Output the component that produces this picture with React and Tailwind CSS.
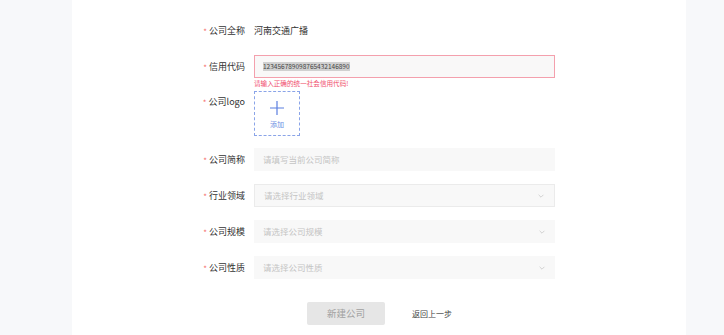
import React from 'react';

const font = { fontFamily: '"Noto Sans CJK SC", "Noto Sans", sans-serif' };

const Label = ({ children, top }) => (
  <div className={`w-[56px] shrink-0 flex justify-end text-[9px] text-[#333] leading-[12px] ${top ? 'self-start pt-[5px]' : 'mt-[1px]'}`}>
    <span className="text-[8px] text-[#f56c6c] mr-[2px] mt-[1px]">*</span>
    <span>{children}</span>
  </div>
);

const Chevron = () => (
  <svg width="8" height="8" viewBox="0 0 10 10" className="text-[#c8c8c8]">
    <path d="M2 3.5 L5 6.5 L8 3.5" fill="none" stroke="currentColor" strokeWidth="1" />
  </svg>
);

const SelectBox = ({ placeholder, bordered }) => (
  <div className={`w-[301px] h-[23px] flex items-center justify-between px-[9px] bg-[#f8f8f8] ${bordered ? 'border border-[#ebebeb]' : ''}`}>
    <span className="text-[8.5px] text-[#c4c4c4]">{placeholder}</span>
    <Chevron />
  </div>
);

const App = () => {
  return (
    <div className="h-[335px] w-full bg-[#f7f8fa] pl-[72px]" style={font}>
      <div className="w-[614px] h-full bg-white flex flex-col pl-[117px]">
        <div className="mt-[19px] h-[23px] flex items-center gap-[9px]">
          <Label>公司全称</Label>
          <span className="text-[9px] text-[#333]">河南交通广播</span>
        </div>

        <div className="mt-[13px] h-[23px] flex items-center gap-[9px]">
          <Label>信用代码</Label>
          <div className="w-[301px] h-[23px] flex items-center px-[8px] bg-[#f9f8f8] border border-[#f4a0ad]">
            <span className="text-[6.5px] text-[#444] bg-[#d0d0d0] leading-[9px]">123456789098765432146890</span>
          </div>
        </div>
        <div className="h-[13px] pl-[65px] text-[6.6px] leading-[10px] text-[#f0506e]">请输入正确的统一社会信用代码!</div>

        <div className="flex gap-[9px]">
          <Label top>公司logo</Label>
          <div className="w-[46px] h-[45px] border border-dashed border-[#8aa4e8] flex flex-col items-center justify-center">
            <svg width="16" height="16" viewBox="0 0 16 16" className="text-[#5b7fe0] mt-[2px]">
              <path d="M8 1 V15 M1 8 H15" stroke="currentColor" strokeWidth="1.2" fill="none" />
            </svg>
            <span className="text-[7px] text-[#6f8fe3] mt-[3px]">添加</span>
          </div>
        </div>

        <div className="mt-[12px] h-[23px] flex items-center gap-[9px]">
          <Label>公司简称</Label>
          <div className="w-[301px] h-[23px] flex items-center px-[9px] bg-[#f8f8f8]">
            <span className="text-[8.5px] text-[#c4c4c4]">请填写当前公司简称</span>
          </div>
        </div>

        <div className="mt-[13px] h-[23px] flex items-center gap-[9px]">
          <Label>行业领域</Label>
          <SelectBox placeholder="请选择行业领域" bordered />
        </div>

        <div className="mt-[13px] h-[23px] flex items-center gap-[9px]">
          <Label>公司规模</Label>
          <SelectBox placeholder="请选择公司规模" />
        </div>

        <div className="mt-[13px] h-[23px] flex items-center gap-[9px]">
          <Label>公司性质</Label>
          <SelectBox placeholder="请选择公司性质" />
        </div>

        <div className="mt-[23px] flex items-center pl-[118px]">
          <button className="w-[78px] h-[23px] rounded-[2px] bg-[#e6e6e6] text-[9.5px] text-[#a0a0a0]">新建公司</button>
          <span className="ml-[27px] text-[8px] text-[#444]">返回上一步</span>
        </div>
      </div>
    </div>
  );
};

export default App;
